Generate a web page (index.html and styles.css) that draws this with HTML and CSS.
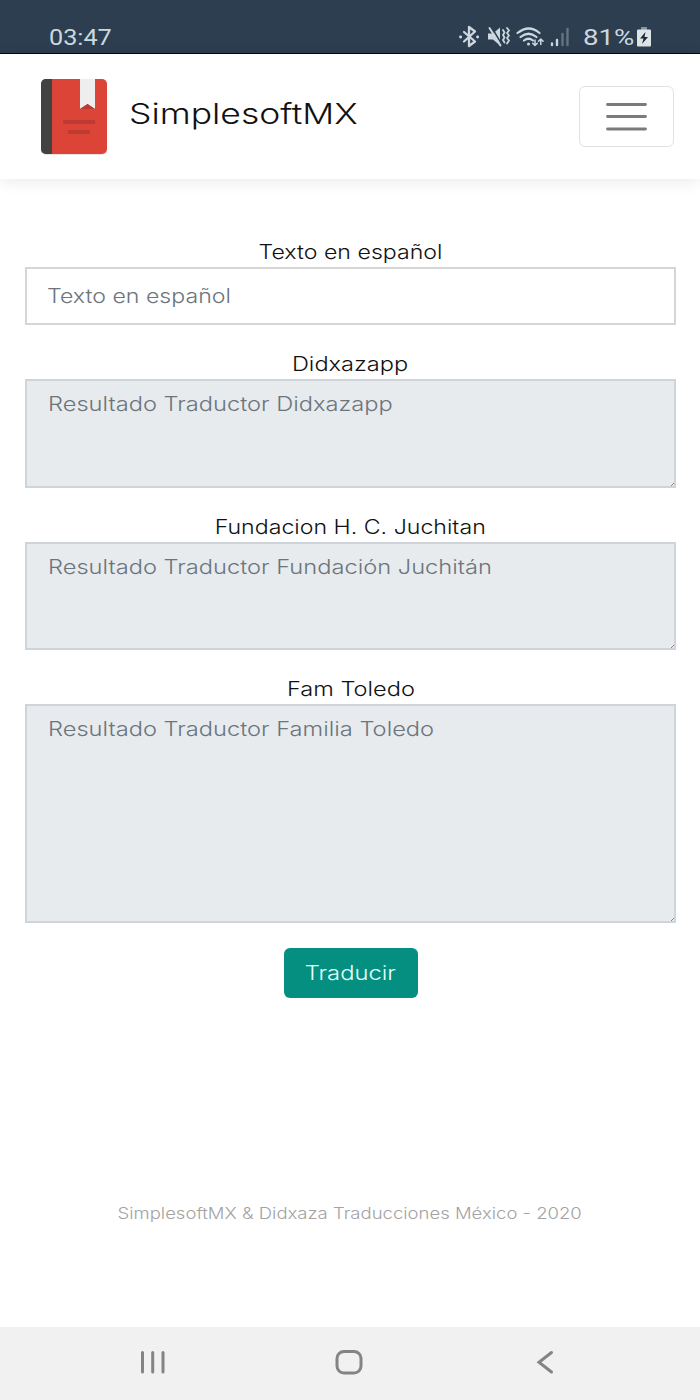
FILE: index.html
```html
<!DOCTYPE html>
<html lang="es">
<head>
    <meta charset="UTF-8">
    <meta name="viewport" content="width=device-width, initial-scale=1.0">
    <title>SimplesoftMX</title>
    <link rel="stylesheet" href="styles.css">
</head>
<body>
    <div class="status">
        <span class="hora">03:47</span>
        <svg class="status-iconos" width="112" height="24" viewBox="0 0 112 24" fill="none" stroke="#ccd7df" stroke-width="2" stroke-linecap="round" stroke-linejoin="round">
            <!-- bluetooth -->
            <path d="M5 7l11 9.500-6 4.500v-19l6 4.500-11 10" stroke-width="2.300"/>
            <path d="M1.500 12h.2M18.500 12h.2" stroke-width="2.800"/>
            <!-- sonido apagado -->
            <path d="M29 8.500h5l7-6v18l-7-6h-5z" fill="#ccd7df" stroke="none"/>
            <path d="M32.500 2l10 17" stroke="#2d3e50" stroke-width="1.500"/>
            <path d="M30.500 3l11 17.500" stroke-width="2"/>
            <path d="M44 5l1.500 2.500-1.500 2.500 1.500 2.500-1.500 2.500 1.500 2.500M48 3l2 2.500-2 2.500 2 2.500-2 2.500 2 2.500-2 3" stroke-width="1.800"/>
            <!-- wifi -->
            <path d="M58.500 8q11.500-9 22 0M61.500 12q8-6.500 16 0M65 15.500q4.500-3.500 9 0" stroke-width="2.200"/>
            <circle cx="69.500" cy="19" r="1.500" fill="#ccd7df" stroke="none"/>
            <path d="M76 15v5.500m-2.300-2.300l2.300 2.300 2.300-2.300M81.800 19.500v-5.500m-2.300 2.300l2.300-2.300 2.300 2.300" stroke-width="1.500"/>
            <!-- cobertura -->
            <path d="M93 18.500v1.500M98 15v5" stroke-width="2.400"/>
            <path d="M103.500 9v11M108.500 4v16" stroke="#647482" stroke-width="2.400"/>
        </svg>
        <span class="bateria">81%</span>
        <svg class="pila" width="14" height="20" viewBox="0 0 14 20">
            <path d="M4 0h6v3H4z" fill="#8795a1"/>
            <rect y="2.500" width="14" height="17" rx="1" fill="#dce4e8"/>
            <path d="M8.500 5L3 11.500h3.500L5 17l6-7H7.500z" fill="#1d2835"/>
        </svg>
    </div>

    <nav class="navbar">
        <svg class="logo" width="68" height="78" viewBox="0 0 68 78">
            <rect x="1" y="2" width="66" height="75" rx="5" fill="#e9e2df"/>
            <rect x="1" y="1" width="66" height="75" rx="5" fill="#db4437"/>
            <path d="M6 1h6v75H6a5 5 0 0 1-5-5V6a5 5 0 0 1 5-5z" fill="#424242"/>
            <path d="M40 1h15v30l-7.500-5-7.500 5z" fill="#eee"/>
            <path d="M40 31l7.500-5 7.500 5z" fill="#b93a30"/>
            <path d="M23 42h32v4H23zM28 52h22v4H28z" fill="#bd3b30"/>
        </svg>
        <span class="marca">SimplesoftMX</span>
        <button class="menu">
            <svg width="42" height="30" viewBox="0 0 42 30" stroke="#7b7b7b" stroke-width="2.800" stroke-linecap="round">
                <path d="M1.500 2.500h38M1.500 14.500h38M1.500 27h38"/>
            </svg>
        </button>
    </nav>

    <div class="contenedor">
        <div class="etiqueta"><span>Texto en español</span></div>
        <div class="campo entrada"><span>Texto en español</span></div>

        <div class="etiqueta"><span class="ancha">Didxazapp</span></div>
        <div class="campo">
            <span>Resultado Traductor Didxazapp</span>
            <svg class="esquina" width="3" height="3" stroke="#888"><path d="M0 3L3 0"/></svg>
        </div>

        <div class="etiqueta"><span>Fundacion H. C. Juchitan</span></div>
        <div class="campo fundacion">
            <span>Resultado Traductor Fundación Juchitán</span>
            <svg class="esquina" width="3" height="3" stroke="#888"><path d="M0 3L3 0"/></svg>
        </div>

        <div class="etiqueta"><span class="ancha">Fam Toledo</span></div>
        <div class="campo grande">
            <span>Resultado Traductor Familia Toledo</span>
            <svg class="esquina" width="3" height="3" stroke="#888"><path d="M0 3L3 0"/></svg>
        </div>

        <button class="boton"><span>Traducir</span></button>
    </div>

    <footer class="footer"><span>SimplesoftMX &amp; Didxaza Traducciones México - 2020</span></footer>

    <div class="navegacion">
        <svg width="28" height="26" viewBox="0 0 28 26" stroke="#848484" stroke-width="3" stroke-linecap="round">
            <path d="M3.500 3.500v19.500M13.700 3.500v19.500M24 3.500v19.500"/>
        </svg>
        <svg width="28" height="26" viewBox="0 0 28 26" fill="none" stroke="#848484" stroke-width="3">
            <rect x="2" y="2.500" width="24" height="21.500" rx="7"/>
        </svg>
        <svg width="28" height="26" viewBox="0 0 28 26" fill="none" stroke="#848484" stroke-width="3" stroke-linecap="round">
            <path d="M20.500 3.500L8 13.300l12.500 9.700"/>
        </svg>
    </div>
</body>
</html>
```
FILE: styles.css
```css
* {
    box-sizing: border-box;
}

body {
    margin: 0;
    height: 1400px;
    display: flex;
    flex-direction: column;
    background-color: #fff;
    font-family: Inter, sans-serif;
    font-weight: 300;
    font-size: 19.5px;
    color: #111;
}

/* las letras van ensanchadas */
span {
    display: inline-block;
    white-space: nowrap;
    transform: scaleX(1.187);
}

.status {
    height: 54px;
    padding: 20px 49px 0 49px;
    display: flex;
    align-items: center;
    background-color: #2d3e50;
    border-bottom: 1px solid #05080c;
    color: #ccd7df;
    font-family: Roboto, sans-serif;
    font-weight: 400;
    font-size: 22.5px;
}

.status span {
    transform-origin: left;
    transform: scaleX(1.12);
}

.status-iconos {
    margin-left: auto;
}

.status .bateria {
    margin-left: 12px;
    width: 54px;
    transform: scaleX(1.23);
}

.navbar {
    height: 125px;
    padding: 0 26px 0 40px;
    display: flex;
    align-items: center;
    box-shadow: 0 2px 16px rgba(0, 0, 0, 0.09);
}

.marca {
    margin: 0 auto 6px 21px;
    font-size: 28px;
    transform-origin: left;
    transform: scaleX(1.268);
}

.menu {
    width: 95px;
    height: 61px;
    padding: 0;
    display: flex;
    justify-content: center;
    align-items: center;
    background: none;
    border: 1.500px solid #e2e2e2;
    border-radius: 6px;
}

.contenedor {
    padding: 58px 24px 0 25px;
    text-align: center;
}

.etiqueta {
    height: 30px;
    line-height: 30px;
}

.etiqueta .ancha {
    transform: scaleX(1.21);
}

.campo {
    position: relative;
    height: 109px;
    margin-bottom: 24px;
    padding: 8px 21px;
    border: 2px solid #ced4da;
    background-color: #e7ebee;
    color: #6c757d;
    line-height: 30px;
    text-align: left;
}

.campo span {
    transform-origin: left;
    transform: scaleX(1.213);
}

.entrada {
    height: 58px;
    padding: 12px 20px;
    border-color: #d6d6d6;
    background-color: #fff;
}

.entrada span {
    transform: scaleX(1.187);
}

.fundacion {
    height: 108px;
}

.grande {
    height: 219px;
    margin-bottom: 25px;
}

.esquina {
    position: absolute;
    right: 0;
    bottom: 0;
}

.boton {
    width: 134px;
    height: 50px;
    border: none;
    border-radius: 6px;
    background-color: #048f81;
    color: #e6fffb;
    font: inherit;
}

.boton span {
    transform: scaleX(1.22);
}

.footer {
    margin-top: 203px;
    text-align: center;
    line-height: 24px;
    font-size: 16px;
    color: #a3a3a3;
}

.footer span {
    transform: scaleX(1.157);
}

.navegacion {
    height: 73px;
    margin-top: auto;
    padding: 0 141px 3px 139px;
    display: flex;
    justify-content: space-between;
    align-items: center;
    background-color: #f1f1f1;
}
```
